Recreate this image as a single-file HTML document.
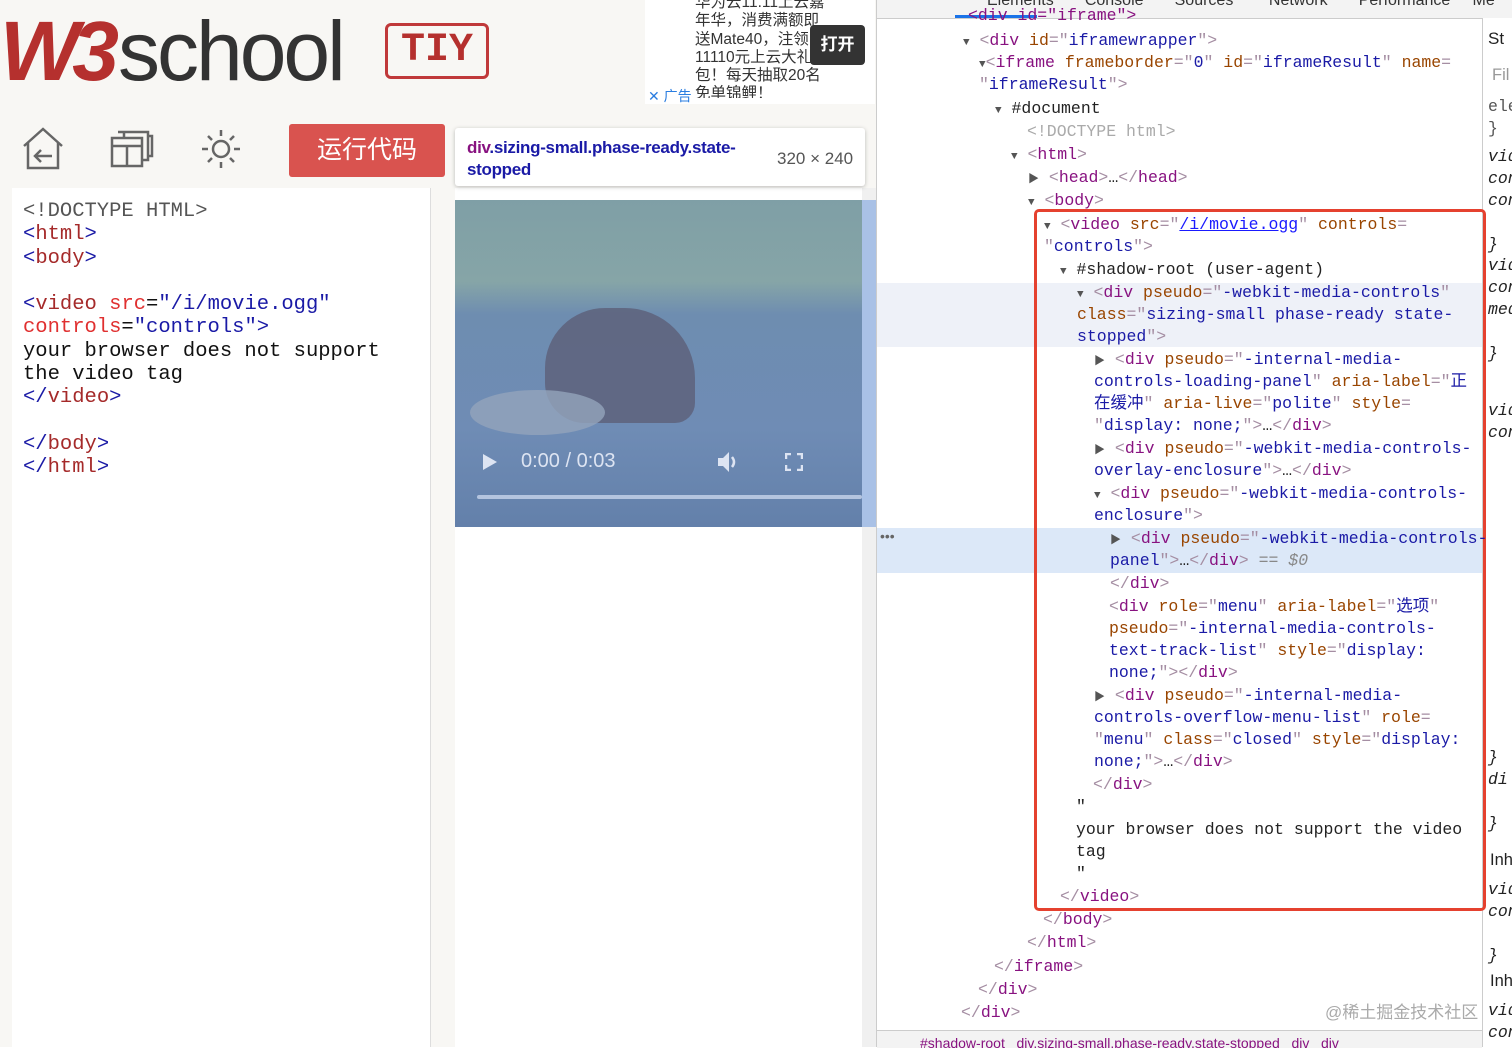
<!DOCTYPE html>
<html><head><meta charset="utf-8"><style>
body{margin:0;width:1512px;height:1047px;overflow:hidden;background:#fff;position:relative;font-family:"Liberation Sans","Noto Sans CJK SC",sans-serif}
.abs{position:absolute}
#left{left:0;top:0;width:876px;height:1047px;background:#f8f7f4}
.code{font-family:"Liberation Mono",monospace;font-size:20.5px;line-height:23.3px;color:#111;white-space:pre}
.ct{color:#555}.cb{color:#1a1aa6}.cn{color:#a52a2a}.ca{color:#e03030}.cv{color:#1a1aa6}
#dt{left:876px;top:0;width:636px;height:1047px;background:#fff;border-left:1px solid #ccc}
.l{position:absolute;font-family:"Liberation Mono","Noto Sans CJK SC",monospace;font-size:16.5px;line-height:22px;white-space:pre;color:#222}
.t{color:#881280}.a{color:#994500}.v{color:#1a1aa6}.g{color:#a58ea3}.tri{color:#555;font-size:11px}
</style></head><body>
<div id="left" class="abs">
 <div class="abs" style="left:0;top:6px;font-size:84px;line-height:90px;white-space:nowrap"><span style="color:#b5302e;font-style:italic;font-weight:bold;letter-spacing:-7px">W3</span><span style="color:#333;letter-spacing:-3px;margin-left:6px">school</span></div>
 <div class="abs" style="left:385px;top:23px;width:98px;height:50px;border:3px solid #c0393a;border-radius:6px;color:#b5302e;font-family:'Liberation Mono',monospace;font-weight:bold;font-size:40px;line-height:50px;text-align:center">TIY</div>
 <div class="abs" style="left:645px;top:0;width:230px;height:104px;background:#fff"></div>
 <div class="abs" style="left:695px;top:-6px;width:130px;font-size:15.5px;line-height:18.3px;color:#333;overflow:hidden;height:104px">华为云11.11上云嘉年华，消费满额即送Mate40，注领11110元上云大礼包！每天抽取20名免单锦鲤！</div>
 <div class="abs" style="left:648px;top:86px;font-size:14px;color:#2a7de0">✕ 广告</div>
 <div class="abs" style="left:810px;top:25px;width:55px;height:40px;background:#333;border-radius:4px;color:#fff;font-size:17px;font-weight:bold;line-height:40px;text-align:center">打开</div>
 <svg class="abs" style="left:18px;top:126px" width="50" height="46" viewBox="0 0 50 46" fill="none" stroke="#666" stroke-width="2.5"><path d="M6 20 L25 3 L44 20 M10 17 V42 H40 V17"/><path d="M34 30 H17 M23 24 L17 30 L23 36"/></svg>
 <svg class="abs" style="left:108px;top:128px" width="48" height="42" viewBox="0 0 48 42" fill="none" stroke="#666" stroke-width="2.5"><rect x="4" y="10" width="30" height="28"/><path d="M4 18H34M19 18V38M10 4H40V32H34M16 10V4"/><path d="M40 8H44V28H40"/></svg>
 <svg class="abs" style="left:198px;top:126px" width="46" height="46" viewBox="0 0 46 46" fill="none" stroke="#666" stroke-width="2.5"><circle cx="23" cy="23" r="8"/><path d="M23 4V10M23 36V42M4 23H10M36 23H42M10 10L14 14M32 32L36 36M10 36L14 32M32 14L36 10"/></svg>
 <div class="abs" style="left:289px;top:124px;width:156px;height:53px;background:#d9534f;border-radius:3px;color:#fff;font-size:25px;line-height:53px;text-align:center">运行代码</div>
 <div class="abs" style="left:12px;top:188px;width:418px;height:859px;background:#fff;border-right:1px solid #ddd"></div>
 <div class="abs code" style="left:23px;top:200px"><span class="ct">&lt;!DOCTYPE HTML&gt;</span>
<span class="cb">&lt;</span><span class="cn">html</span><span class="cb">&gt;</span>
<span class="cb">&lt;</span><span class="cn">body</span><span class="cb">&gt;</span>

<span class="cb">&lt;</span><span class="cn">video</span> <span class="ca">src</span>=<span class="cv">"/i/movie.ogg"</span>
<span class="ca">controls</span>=<span class="cv">"controls"</span><span class="cb">&gt;</span>
your browser does not support
the video tag
<span class="cb">&lt;/</span><span class="cn">video</span><span class="cb">&gt;</span>

<span class="cb">&lt;/</span><span class="cn">body</span><span class="cb">&gt;</span>
<span class="cb">&lt;/</span><span class="cn">html</span><span class="cb">&gt;</span></div>
 <div class="abs" style="left:455px;top:188px;width:407px;height:859px;background:#fff"></div>
 <div class="abs" style="left:862px;top:188px;width:14px;height:859px;background:#f0f0f0"></div>
 <div class="abs" style="left:455px;top:200px;width:420px;height:327px;background:linear-gradient(180deg,#7f9fa6 0%,#86a5a7 25%,#6e8db0 35%,#6f8cb5 70%,#6380aa 100%)"></div>
 <div class="abs" style="left:545px;top:308px;width:150px;height:115px;background:#5d5f78;border-radius:60px 70px 20px 40px;opacity:.8"></div>
 <div class="abs" style="left:470px;top:390px;width:135px;height:45px;background:#93a4bb;border-radius:50%;opacity:.8"></div>
 <div class="abs" style="left:862px;top:200px;width:14px;height:327px;background:#a9c1e6"></div>
 <svg class="abs" style="left:482px;top:453px" width="16" height="18"><path d="M1 1 L15 9 L1 17Z" fill="#dde4f2"/></svg>
 <div class="abs" style="left:521px;top:450px;color:#dde4f2;font-size:20px">0:00 / 0:03</div>
 <svg class="abs" style="left:717px;top:450px" width="24" height="24" fill="#dde4f2"><path d="M1 8H6L12 2V22L6 16H1Z"/><path d="M15 7Q19 12 15 17" stroke="#dde4f2" stroke-width="2.5" fill="none"/></svg>
 <svg class="abs" style="left:785px;top:453px" width="18" height="18" fill="none" stroke="#dde4f2" stroke-width="2.5"><path d="M1 6V1H6M12 1H17V6M17 12V17H12M6 17H1V12"/></svg>
 <div class="abs" style="left:477px;top:495px;width:385px;height:4px;background:#b4c4df;border-radius:2px"></div>
 <div class="abs" style="left:455px;top:128px;width:410px;height:58px;background:#fff;box-shadow:0 1px 4px rgba(0,0,0,.25);border-radius:3px"></div>
 <div class="abs" style="left:467px;top:137px;width:300px;font-size:17px;font-weight:bold;line-height:22px;color:#1a1aa6;letter-spacing:-.3px"><span style="color:#881280">div</span>.sizing-small.phase-ready.state-stopped</div>
 <div class="abs" style="left:777px;top:149px;font-size:17px;color:#555">320 × 240</div>
</div>
<div id="dt" class="abs">
 <div class="abs" style="left:0;top:0;width:636px;height:18px;background:#f3f3f3;border-bottom:1px solid #ccc;overflow:hidden"><div style="position:absolute;top:-8px;left:110px;font-size:16px;color:#333;white-space:nowrap;word-spacing:0">Elements&nbsp;&nbsp;&nbsp;&nbsp;&nbsp;&nbsp;&nbsp;Console&nbsp;&nbsp;&nbsp;&nbsp;&nbsp;&nbsp;&nbsp;Sources&nbsp;&nbsp;&nbsp;&nbsp;&nbsp;&nbsp;&nbsp;&nbsp;Network&nbsp;&nbsp;&nbsp;&nbsp;&nbsp;&nbsp;&nbsp;Performance&nbsp;&nbsp;&nbsp;&nbsp;&nbsp;Me</div><div style="position:absolute;left:78px;top:15px;width:82px;height:3px;background:#1a73e8"></div></div>
 <div class="abs" style="left:605px;top:18px;width:31px;height:1029px;background:#fff;border-left:1px solid #ccc;overflow:hidden"></div>
 <div class="abs" style="left:0;top:283px;width:605px;height:64px;background:#eef1f8"></div>
 <div class="abs" style="left:0;top:528px;width:605px;height:45px;background:#dce8f8"></div>
 <div class="abs" style="left:0;top:1030px;width:605px;height:17px;background:#f3f3f3;border-top:1px solid #ccc;overflow:hidden"><div style="position:absolute;left:43px;top:4px;font-size:14px;color:#881280;white-space:nowrap">#shadow-root&nbsp;&nbsp;&nbsp;div.sizing-small.phase-ready.state-stopped&nbsp;&nbsp;&nbsp;div&nbsp;&nbsp;&nbsp;div</div></div>
 <div class="abs" style="left:3px;top:528px;color:#666;font-size:14px">•••</div>
 <div class="abs" style="left:157px;top:209px;width:446px;height:696px;border:3px solid #e5412f;border-radius:5px"></div>
 <div class="abs" style="left:448px;top:998px;font-size:17px;color:#aaa">@稀土掘金技术社区</div>
</div>
<div class="l" style="left:968px;top:5px;color:#881280">&lt;div id="iframe"&gt;</div>
<div class="l" style="left:963px;top:30px"><span class="tri">▼</span> <span class="g">&lt;</span><span class="t">div</span> <span class="a">id</span><span class="g">="</span><span class="v">iframewrapper</span><span class="g">"&gt;</span></div>
<div class="l" style="left:979px;top:52px"><span class="tri">▼</span><span class="g">&lt;</span><span class="t">iframe</span> <span class="a">frameborder</span><span class="g">="</span><span class="v">0</span><span class="g">"</span> <span class="a">id</span><span class="g">="</span><span class="v">iframeResult</span><span class="g">"</span> <span class="a">name</span><span class="g">=</span></div>
<div class="l" style="left:979px;top:74px"><span class="g">"</span><span class="v">iframeResult</span><span class="g">"&gt;</span></div>
<div class="l" style="left:995px;top:98px"><span class="tri">▼</span> #document</div>
<div class="l" style="left:1027px;top:121px;color:#aaa">&lt;!DOCTYPE html&gt;</div>
<div class="l" style="left:1011px;top:144px"><span class="tri">▼</span> <span class="g">&lt;</span><span class="t">html</span><span class="g">&gt;</span></div>
<div class="l" style="left:1028px;top:167px"><span class="tri">▶</span> <span class="g">&lt;</span><span class="t">head</span><span class="g">&gt;</span>…<span class="g">&lt;/</span><span class="t">head</span><span class="g">&gt;</span></div>
<div class="l" style="left:1028px;top:190px"><span class="tri">▼</span> <span class="g">&lt;</span><span class="t">body</span><span class="g">&gt;</span></div>
<div class="l" style="left:1044px;top:214px"><span class="tri">▼</span> <span class="g">&lt;</span><span class="t">video</span> <span class="a">src</span><span class="g">="</span><span class="v" style="text-decoration:underline;color:#1a1aff">/i/movie.ogg</span><span class="g">"</span> <span class="a">controls</span><span class="g">=</span></div>
<div class="l" style="left:1044px;top:236px"><span class="g">"</span><span class="v">controls</span><span class="g">"&gt;</span></div>
<div class="l" style="left:1060px;top:259px"><span class="tri">▼</span> #shadow-root (user-agent)</div>
<div class="l" style="left:1077px;top:282px"><span class="tri">▼</span> <span class="g">&lt;</span><span class="t">div</span> <span class="a">pseudo</span><span class="g">="</span><span class="v">-webkit-media-controls</span><span class="g">"</span></div>
<div class="l" style="left:1077px;top:304px"><span class="a">class</span><span class="g">="</span><span class="v">sizing-small phase-ready state-</span></div>
<div class="l" style="left:1077px;top:326px"><span class="v">stopped</span><span class="g">"&gt;</span></div>
<div class="l" style="left:1094px;top:349px"><span class="tri">▶</span> <span class="g">&lt;</span><span class="t">div</span> <span class="a">pseudo</span><span class="g">="</span><span class="v">-internal-media-</span></div>
<div class="l" style="left:1094px;top:371px"><span class="v">controls-loading-panel</span><span class="g">"</span> <span class="a">aria-label</span><span class="g">="</span><span class="v">正</span></div>
<div class="l" style="left:1094px;top:393px"><span class="v">在缓冲</span><span class="g">"</span> <span class="a">aria-live</span><span class="g">="</span><span class="v">polite</span><span class="g">"</span> <span class="a">style</span><span class="g">=</span></div>
<div class="l" style="left:1094px;top:415px"><span class="g">"</span><span class="v">display: none;</span><span class="g">"&gt;</span>…<span class="g">&lt;/</span><span class="t">div</span><span class="g">&gt;</span></div>
<div class="l" style="left:1094px;top:438px"><span class="tri">▶</span> <span class="g">&lt;</span><span class="t">div</span> <span class="a">pseudo</span><span class="g">="</span><span class="v">-webkit-media-controls-</span></div>
<div class="l" style="left:1094px;top:460px"><span class="v">overlay-enclosure</span><span class="g">"&gt;</span>…<span class="g">&lt;/</span><span class="t">div</span><span class="g">&gt;</span></div>
<div class="l" style="left:1094px;top:483px"><span class="tri">▼</span> <span class="g">&lt;</span><span class="t">div</span> <span class="a">pseudo</span><span class="g">="</span><span class="v">-webkit-media-controls-</span></div>
<div class="l" style="left:1094px;top:505px"><span class="v">enclosure</span><span class="g">"&gt;</span></div>
<div class="l" style="left:1110px;top:528px"><span class="tri">▶</span> <span class="g">&lt;</span><span class="t">div</span> <span class="a">pseudo</span><span class="g">="</span><span class="v">-webkit-media-controls-</span></div>
<div class="l" style="left:1110px;top:550px"><span class="v">panel</span><span class="g">"&gt;</span>…<span class="g">&lt;/</span><span class="t">div</span><span class="g">&gt;</span> <span style="color:#888">== <i>$0</i></span></div>
<div class="l" style="left:1110px;top:573px"><span class="g">&lt;/</span><span class="t">div</span><span class="g">&gt;</span></div>
<div class="l" style="left:1109px;top:596px"><span class="g">&lt;</span><span class="t">div</span> <span class="a">role</span><span class="g">="</span><span class="v">menu</span><span class="g">"</span> <span class="a">aria-label</span><span class="g">="</span><span class="v">选项</span><span class="g">"</span></div>
<div class="l" style="left:1109px;top:618px"><span class="a">pseudo</span><span class="g">="</span><span class="v">-internal-media-controls-</span></div>
<div class="l" style="left:1109px;top:640px"><span class="v">text-track-list</span><span class="g">"</span> <span class="a">style</span><span class="g">="</span><span class="v">display:</span></div>
<div class="l" style="left:1109px;top:662px"><span class="v">none;</span><span class="g">"&gt;&lt;/</span><span class="t">div</span><span class="g">&gt;</span></div>
<div class="l" style="left:1094px;top:685px"><span class="tri">▶</span> <span class="g">&lt;</span><span class="t">div</span> <span class="a">pseudo</span><span class="g">="</span><span class="v">-internal-media-</span></div>
<div class="l" style="left:1094px;top:707px"><span class="v">controls-overflow-menu-list</span><span class="g">"</span> <span class="a">role</span><span class="g">=</span></div>
<div class="l" style="left:1094px;top:729px"><span class="g">"</span><span class="v">menu</span><span class="g">"</span> <span class="a">class</span><span class="g">="</span><span class="v">closed</span><span class="g">"</span> <span class="a">style</span><span class="g">="</span><span class="v">display:</span></div>
<div class="l" style="left:1094px;top:751px"><span class="v">none;</span><span class="g">"&gt;</span>…<span class="g">&lt;/</span><span class="t">div</span><span class="g">&gt;</span></div>
<div class="l" style="left:1093px;top:774px"><span class="g">&lt;/</span><span class="t">div</span><span class="g">&gt;</span></div>
<div class="l" style="left:1076px;top:796px">"</div>
<div class="l" style="left:1076px;top:819px">your browser does not support the video</div>
<div class="l" style="left:1076px;top:841px">tag</div>
<div class="l" style="left:1076px;top:863px">"</div>
<div class="l" style="left:1060px;top:886px"><span class="g">&lt;/</span><span class="t">video</span><span class="g">&gt;</span></div>
<div class="l" style="left:1043px;top:909px"><span class="g">&lt;/</span><span class="t">body</span><span class="g">&gt;</span></div>
<div class="l" style="left:1027px;top:932px"><span class="g">&lt;/</span><span class="t">html</span><span class="g">&gt;</span></div>
<div class="l" style="left:994px;top:956px"><span class="g">&lt;/</span><span class="t">iframe</span><span class="g">&gt;</span></div>
<div class="l" style="left:978px;top:979px"><span class="g">&lt;/</span><span class="t">div</span><span class="g">&gt;</span></div>
<div class="l" style="left:961px;top:1002px"><span class="g">&lt;/</span><span class="t">div</span><span class="g">&gt;</span></div>
<div class="l" style="left:1488px;top:28px;font-family:'Liberation Sans';font-size:17px">St</div>
<div class="l" style="left:1492px;top:64px;color:#999;font-family:'Liberation Sans'">Fil</div>
<div class="l" style="left:1488px;top:96px;color:#555">ele<br>}</div>
<div class="l" style="left:1488px;top:146px;font-style:italic">vid<br>con<br>con<br><br>}</div>
<div class="l" style="left:1488px;top:255px;font-style:italic">vid<br>con<br>med<br><br>}</div>
<div class="l" style="left:1488px;top:400px;font-style:italic">vid<br>con</div>
<div class="l" style="left:1488px;top:747px;font-style:italic">}<br>di<br><br>}</div>
<div class="l" style="left:1490px;top:849px;font-family:'Liberation Sans'">Inh</div>
<div class="l" style="left:1488px;top:879px;font-style:italic">vid<br>con<br><br>}</div>
<div class="l" style="left:1490px;top:970px;font-family:'Liberation Sans'">Inh</div>
<div class="l" style="left:1488px;top:1000px;font-style:italic">vid<br>con</div>
</body></html>
